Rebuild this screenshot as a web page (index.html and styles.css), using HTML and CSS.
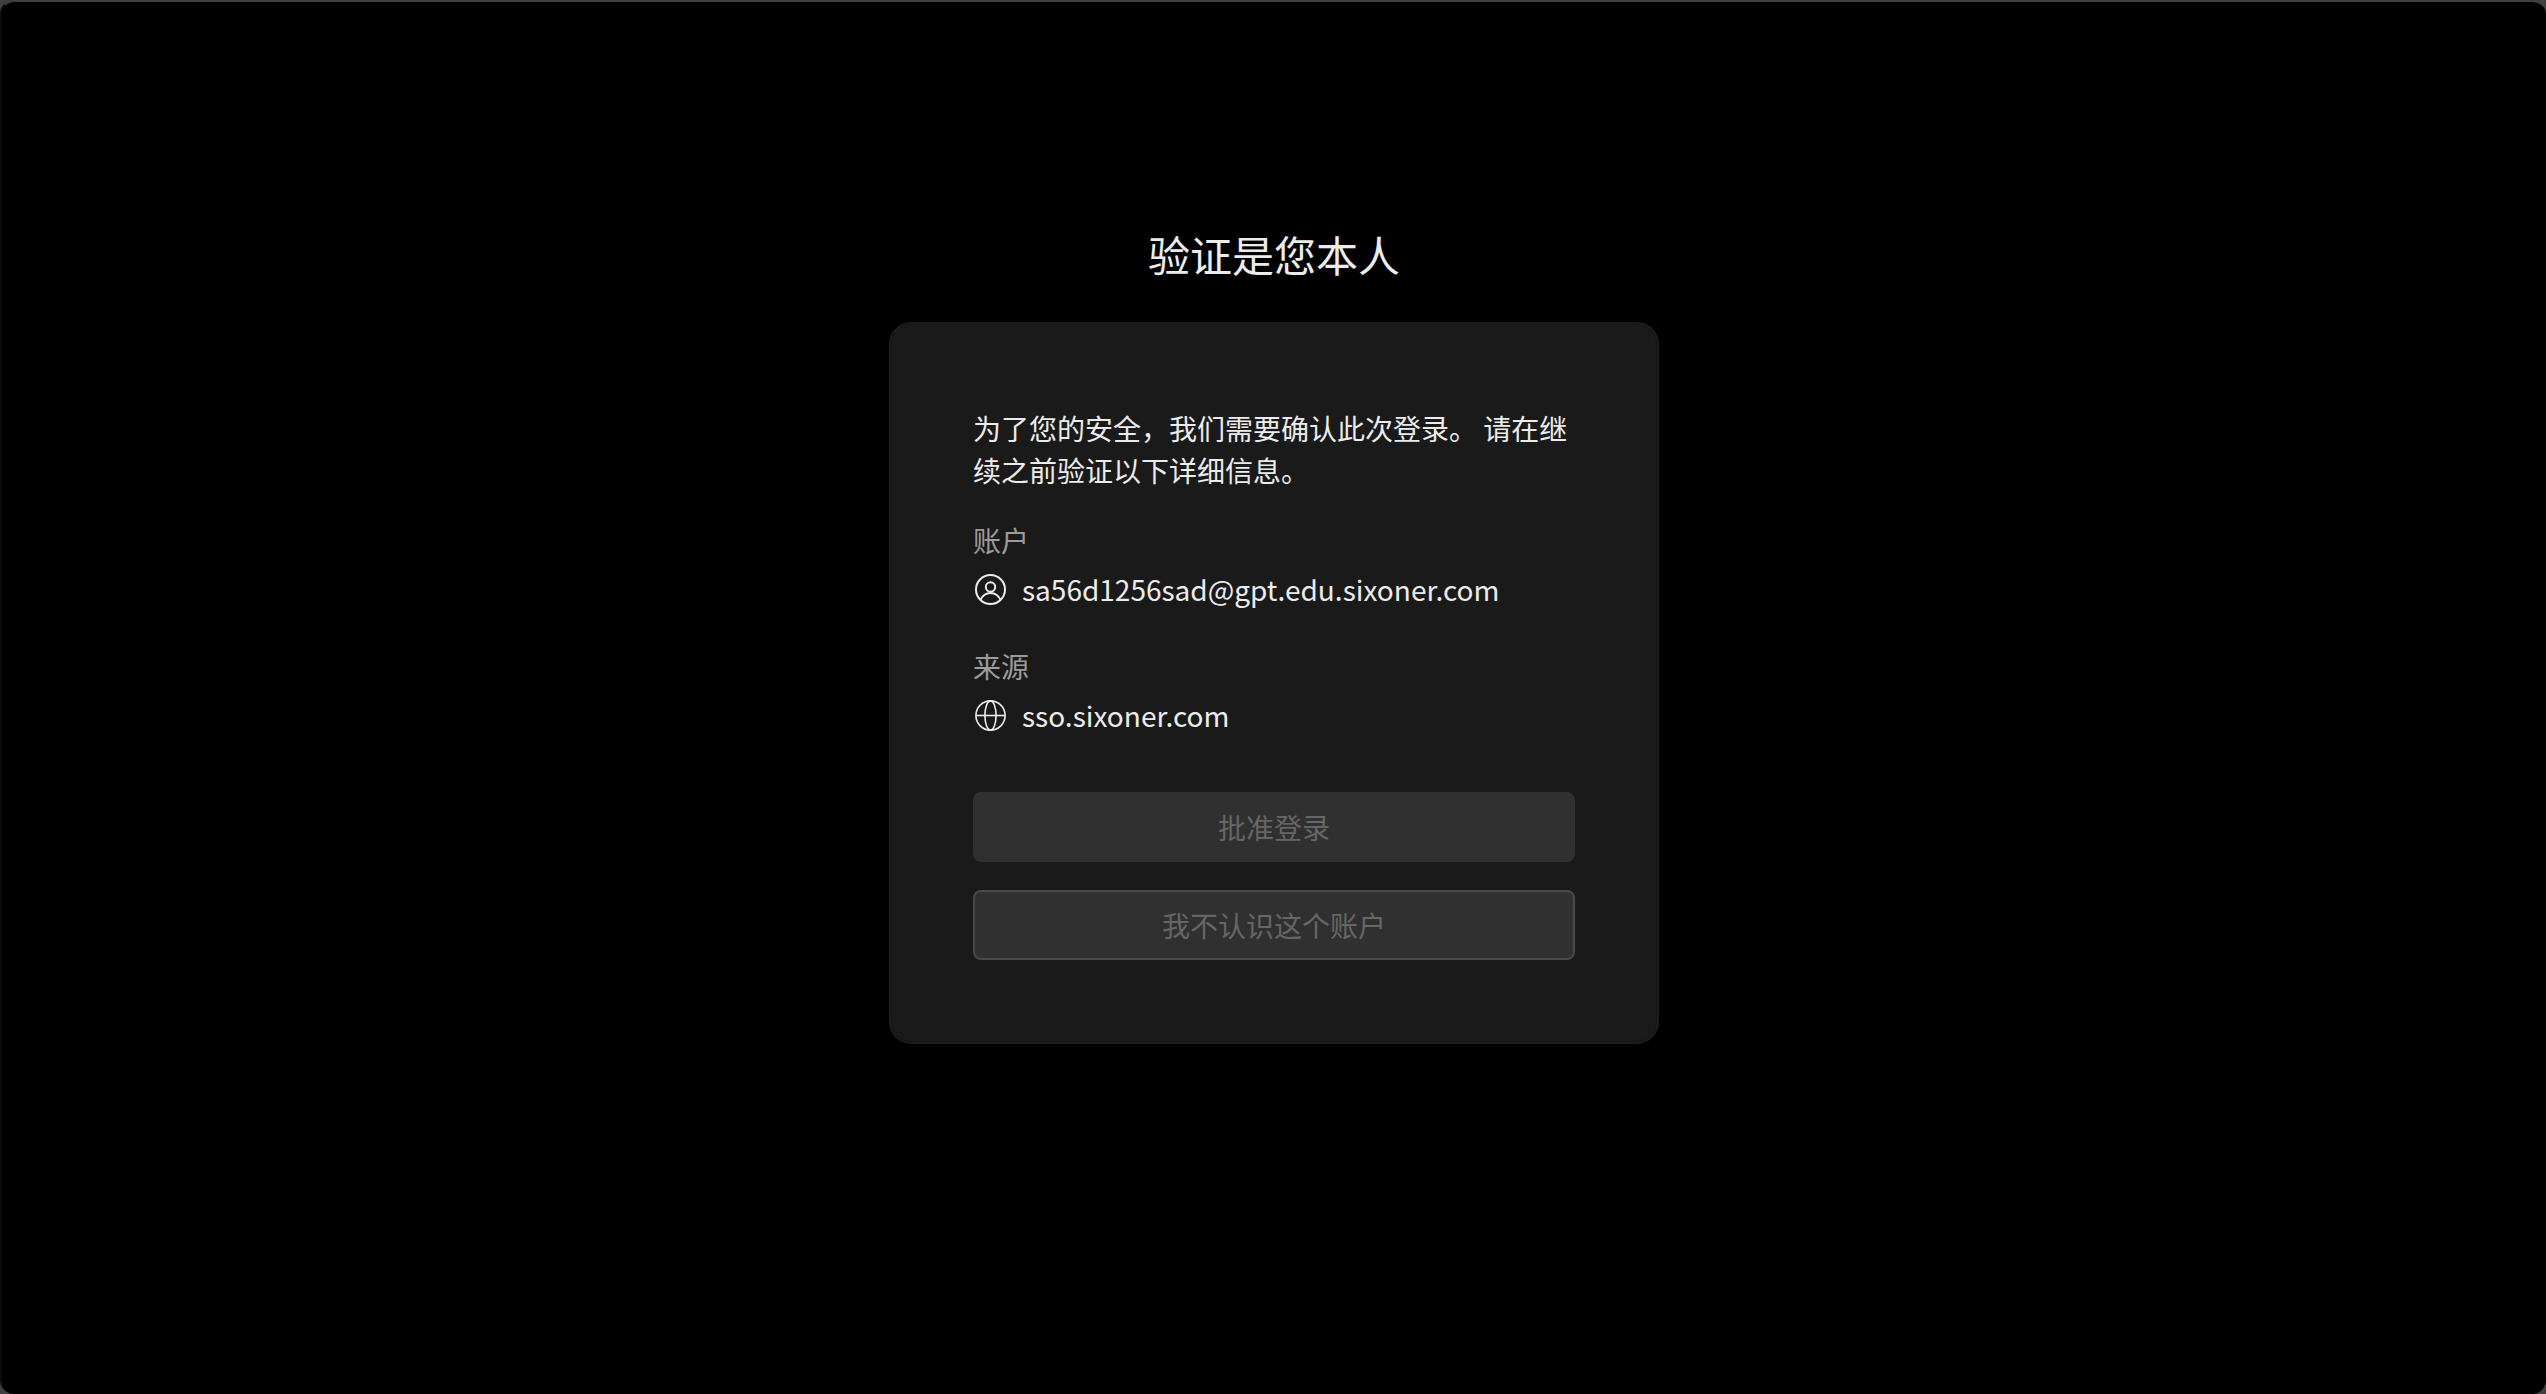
FILE: index.html
```
<!DOCTYPE html>
<html lang="zh-CN">

<head>
  <meta charset="UTF-8">
  <meta name="viewport" content="width=device-width, initial-scale=1.0">
  <title>验证是您本人</title>
  <link rel="stylesheet" href="styles.css">
</head>

<body>
  <main class="page">
    <h1 class="title">验证是您本人</h1>
    <section class="card">
      <p class="intro">为了您的安全，我们需要确认此次登录。 请在继续之前验证以下详细信息。</p>
      <dl class="details">
        <div class="detail">
          <dt>账户</dt>
          <dd>
            <svg class="icon" viewBox="0 0 35 35" aria-hidden="true">
              <circle cx="17.500" cy="17.500" r="14.500" />
              <circle cx="17.500" cy="15" r="4.700" />
              <path d="M7.500 28c2-4.500 5.500-7 10-7s8 2.500 10 7" />
            </svg>
            <span>sa56d1256sad@gpt.edu.sixoner.com</span>
          </dd>
        </div>
        <div class="detail">
          <dt>来源</dt>
          <dd>
            <svg class="icon icon-thin" viewBox="0 0 35 35" aria-hidden="true">
              <circle cx="17.500" cy="17.500" r="14.600" />
              <ellipse cx="17.500" cy="17.500" rx="5.600" ry="14.600" />
              <path d="M3 17.500h29" />
            </svg>
            <span>sso.sixoner.com</span>
          </dd>
        </div>
      </dl>
      <form class="actions">
        <button class="btn" type="submit" disabled>批准登录</button>
        <button class="btn btn-outline" type="button" disabled>我不认识这个账户</button>
      </form>
    </section>
  </main>
</body>

</html>
```
FILE: styles.css
```
* {
  box-sizing: border-box;
}

body {
  margin: 0;
  background: #404040;
  color: #ececec;
  font-family: "Noto Sans CJK SC", sans-serif;
  font-size: 28px;
  line-height: 42px;
}

.page {
  display: flex;
  flex-direction: column;
  align-items: center;
  min-height: 100vh;
  padding: 220px 24px 84px;
  background: #000;
  border-top: 2px solid #404040;
  border-left: 2px solid #0c0c0c;
  border-radius: 14px;
}

.title {
  margin: 0 0 36px;
  font-size: 42px;
  font-weight: 400;
  line-height: 64px;
}

.card {
  width: 100%;
  max-width: 770px;
  padding: 83px 82px 82px;
  background: #1a1a1a;
  border: 2px solid #1c1c1c;
  border-radius: 22px;
  box-shadow: inset 0 0 0 1px #161616;
}

.intro {
  margin: 0 0 28px;
}

.details {
  margin: 0 0 49px;
}

.detail + .detail {
  margin-top: 28px;
}

dt {
  color: #9c9c9c;
}

dd {
  display: flex;
  align-items: center;
  gap: 14px;
  margin: 0;
  padding: 7px 0;
}

.icon {
  width: 35px;
  height: 35px;
  fill: none;
  stroke: #ececec;
  stroke-width: 2;
}

.icon-thin {
  stroke-width: 1.6;
}

.actions {
  display: flex;
  flex-direction: column;
  gap: 28px;
}

.btn {
  height: 70px;
  padding: 0 28px;
  background: #303030;
  color: #666;
  border: 2px solid #303030;
  border-radius: 8px;
  font: inherit;
}

.btn-outline {
  border-color: #4a4a4a;
}
```
